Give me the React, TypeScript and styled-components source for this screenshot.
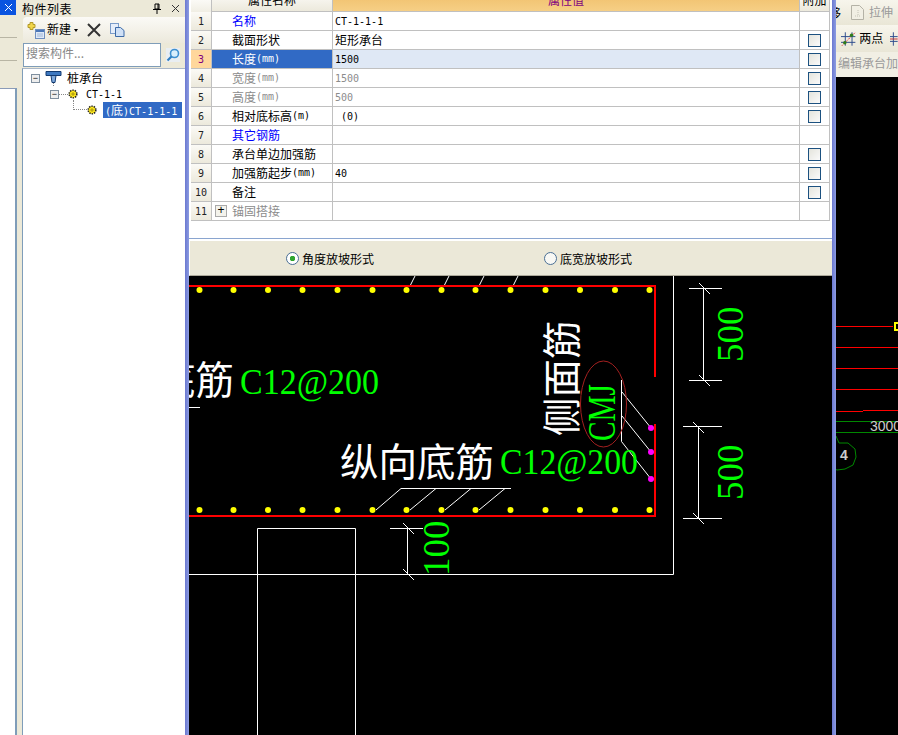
import styled, { createGlobalStyle } from "styled-components"

const GlobalStyle = createGlobalStyle`
    html, body {
        margin: 0;
        padding: 0;
        background: #fff;
    }
    * {
        box-sizing: border-box;
    }
`

const rows = [
    { no: 1, name: "名称", unit: "", value: "CT-1-1-1", tone: "blue", check: false },
    { no: 2, name: "截面形状", unit: "", value: "", cn: "矩形承台", tone: "", check: true },
    { no: 3, name: "长度", unit: "(mm)", value: "1500", tone: "active", check: true },
    { no: 4, name: "宽度", unit: "(mm)", value: "1500", tone: "grey", check: true },
    { no: 5, name: "高度", unit: "(mm)", value: "500", tone: "grey", check: true },
    { no: 6, name: "相对底标高", unit: "(m)", value: " (0)", tone: "", check: true },
    { no: 7, name: "其它钢筋", unit: "", value: "", tone: "blue", check: false },
    { no: 8, name: "承台单边加强筋", unit: "", value: "", tone: "", check: true },
    { no: 9, name: "加强筋起步", unit: "(mm)", value: "40", tone: "", check: true },
    { no: 10, name: "备注", unit: "", value: "", tone: "", check: true },
    { no: 11, name: "锚固搭接", unit: "", value: "", tone: "grey", check: false },
]

const rebarDots = [199.5, 233.5, 268, 302.5, 337.5, 372.5, 406.5, 441.5, 475.5, 510.5, 545.5, 580, 615, 649.5]

function GearIcon() {
    return (
        <svg width="10" height="10" viewBox="0 0 10 10">
            <circle cx="5" cy="5" r="3.8" fill="#ffe81a" stroke="#222" strokeWidth="1.6" strokeDasharray="1.4 1" />
            <path d="M3 5h4M5 3v4" stroke="#8a7a10" strokeWidth="0.7" />
        </svg>
    )
}

function CadDrawing() {
    return (
        <CadSvg viewBox="189 276 643 459" width="643" height="459">
            <g stroke="#fff" fill="none" strokeWidth="1">
                <path d="M189 574.5H673.5V276" />
                <path d="M257.5 735V528.5H355.5V735" />
                <path d="M189 407.5H200" />
                <path d="M410 286l5-10M444 286l5-10M479 286l5-10M513 286l5-10" />
                <path d="M376 510l25-21.5H511M410 510l26-21.5M445 510l26-21.5M479 510l26-21.5" />
                <path d="M621.5 380V441.5L651 479M622 392L651 428M622 416L651 452" />
                <path d="M689 288.5H722M703.5 288V380M689 380.5H722M699 283l11 11M699 375l11 11" />
                <path d="M683 426.5H722M698.5 426V518M683 518.5H722M693 422l11 11M693 513l11 11" />
                <path d="M390 528.5H423M407.5 528V575M403 523l11 11M403 569l11 11" />
            </g>
            <path d="M189 286H655V377M655 424V516H189" stroke="#f00" strokeWidth="2" fill="none" />
            <ellipse cx="603.5" cy="404" rx="23" ry="43" stroke="#a52020" fill="none" />
            {rebarDots.map(x => (
                <g key={x} fill="#ff0">
                    <circle cx={x} cy="290" r="3" />
                    <circle cx={x} cy="510" r="3" />
                </g>
            ))}
            <g fill="#f0f">
                <circle cx="651" cy="428" r="3" />
                <circle cx="651" cy="452" r="3" />
                <circle cx="651" cy="479" r="3" />
            </g>
            <CadLabel x="157" y="394" fontSize="38.5" fill="#fff">底筋</CadLabel>
            <CadLabel x="240" y="394" fontSize="36" textLength="139" lengthAdjust="spacingAndGlyphs" fill="#0f0">C12@200</CadLabel>
            <CadLabel x="340" y="476" fontSize="38.5" fill="#fff">纵向底筋</CadLabel>
            <CadLabel x="500" y="474" fontSize="36" textLength="138" lengthAdjust="spacingAndGlyphs" fill="#0f0">C12@200</CadLabel>
            <CadLabel transform="translate(576 436) rotate(-90)" fontSize="38.5" fill="#fff">侧面筋</CadLabel>
            <CadLabel transform="translate(615 441) rotate(-90)" fontSize="41" textLength="57" lengthAdjust="spacingAndGlyphs" fill="#0f0">CMJ</CadLabel>
            <CadLabel transform="translate(743 362) rotate(-90)" fontSize="37" fill="#0f0">500</CadLabel>
            <CadLabel transform="translate(743 500) rotate(-90)" fontSize="37" fill="#0f0">500</CadLabel>
            <CadLabel transform="translate(449 576) rotate(-90)" fontSize="37" fill="#0f0">100</CadLabel>
        </CadSvg>
    )
}

function SideDrawing() {
    return (
        <SideSvg viewBox="836 77 62 658" width="62" height="658">
            <path d="M836 326.5H893M836 347.5H898M836 368.5H898M836 389.5H898M836 411.5H863M863 410.5H898" stroke="#f00" fill="none" />
            <rect x="895" y="323" width="6" height="7" fill="none" stroke="#ff0" strokeWidth="2" />
            <path d="M836 421.5H898M836 432.5H898" stroke="#080" fill="none" />
            <path d="M836 436l3 7 9 0 7 6 1 8-3 8-8 4-8 1-4-2" stroke="#080" fill="none" />
            <SideLabel x="870" y="431" fontSize="14" fill="#ccc">3000</SideLabel>
            <SideLabel x="840" y="460" fontSize="14" fontWeight="700" fill="#ccc">4</SideLabel>
        </SideSvg>
    )
}

export default function App() {
    return (
        <Page>
            <GlobalStyle />
            <LeftStrip>
                <StripClose>
                    <svg width="9" height="9" viewBox="0 0 9 9"><path d="M1 1l7 7M8 1L1 8" stroke="#fff" fill="none" /></svg>
                </StripClose>
                <StripTab />
                <StripTab />
                <StripBody />
            </LeftStrip>
            <ListPanel>
                <TitleBar>
                    <TitleText>构件列表</TitleText>
                    <TitleIcons>
                        <svg width="10" height="11" viewBox="0 0 10 11"><path d="M3 1h4v5H3zM1 6.5h8M5 7v4M6 1v5" stroke="#000" fill="none" /></svg>
                        <svg width="9" height="9" viewBox="0 0 9 9"><path d="M1 1l7 7M8 1L1 8" stroke="#333" fill="none" /></svg>
                    </TitleIcons>
                </TitleBar>
                <ToolBar>
                    <svg width="18" height="17" viewBox="0 0 18 17">
                        <path d="M3 0.5h3v2h2v3H6v2H3v-2H1v-3h2z" fill="#f2d64a" stroke="#b39a2a" />
                        <rect x="8.5" y="7.5" width="9" height="9" fill="#dfe9f7" stroke="#6f8fc0" />
                        <path d="M9 8h8v2H9z" fill="#4a76b8" />
                        <path d="M10 12h6M10 14h6" stroke="#9fb6d8" />
                    </svg>
                    <NewLabel>新建</NewLabel>
                    <Caret />
                    <svg width="14" height="14" viewBox="0 0 14 14"><path d="M1 1l12 12M13 1L1 13" stroke="#333" strokeWidth="2" fill="none" /></svg>
                    <svg width="15" height="14" viewBox="0 0 15 14">
                        <rect x="0.5" y="0.5" width="8" height="10" fill="#e6eefa" stroke="#7b9cc9" />
                        <path d="M5.5 4.5h5l3.5 3v6h-8.5z" fill="#cfe0f6" stroke="#3c6aa8" />
                    </svg>
                </ToolBar>
                <SearchRow>
                    <SearchInput>搜索构件...</SearchInput>
                    <SearchButton>
                        <svg width="14" height="14" viewBox="0 0 14 14">
                            <circle cx="8.5" cy="5.5" r="4" fill="#d8eefc" stroke="#3d8fd0" strokeWidth="1.6" />
                            <path d="M5.5 8.5L1.5 12.5" stroke="#2f7fc4" strokeWidth="2.2" />
                        </svg>
                    </SearchButton>
                </SearchRow>
                <TreeBox>
                    <TreeRow $indent={8} $gap={5}>
                        <Toggle>−</Toggle>
                        <svg width="17" height="17" viewBox="0 0 17 17">
                            <path d="M1 1.5h15v4H1z" fill="#3d78c0" stroke="#123a70" />
                            <path d="M6 5.5h5l-1 7H7z" fill="#7fa9dc" stroke="#123a70" />
                            <path d="M8.5 13v3" stroke="#888" strokeDasharray="1 1" />
                        </svg>
                        <TreeText>桩承台</TreeText>
                    </TreeRow>
                    <TreeRow $indent={27} $gap={0}>
                        <Toggle>−</Toggle>
                        <TreeDash />
                        <GearIcon />
                        <TreeCode>CT-1-1</TreeCode>
                    </TreeRow>
                    <TreeRow $indent={50} $gap={0}>
                        <TreeElbow />
                        <GearIcon />
                        <Selected><Ascii>(</Ascii>底<Ascii>)CT-1-1-1</Ascii></Selected>
                    </TreeRow>
                </TreeBox>
            </ListPanel>
            <Splitter />
            <CenterColumn>
                <GridBox>
                    <HeaderRow>
                        <NoCell />
                        <HeadName>属性名称</HeadName>
                        <HeadValue>属性值</HeadValue>
                        <HeadAttach>附加</HeadAttach>
                    </HeaderRow>
                    {rows.map(r => (
                        <PropRow key={r.no}>
                            <NoCell $active={r.tone === "active"}>{r.no}</NoCell>
                            <NameCell $tone={r.tone}>
                                {r.no === 11 && <PlusBox>+</PlusBox>}
                                {r.name}
                                {r.unit && <Ascii>{r.unit}</Ascii>}
                            </NameCell>
                            <ValueCell $tone={r.tone}>
                                {r.cn ? <ValueCn>{r.cn}</ValueCn> : r.value}
                            </ValueCell>
                            <AttachCell>{r.check && <CheckBox />}</AttachCell>
                        </PropRow>
                    ))}
                </GridBox>
                <RadioBar>
                    <RadioItem><Radio $on />角度放坡形式</RadioItem>
                    <RadioItem><Radio />底宽放坡形式</RadioItem>
                </RadioBar>
                <CadDrawing />
            </CenterColumn>
            <BlueBar />
            <RightColumn>
                <RightTool>
                    <ClippedGlyph>移</ClippedGlyph>
                    <svg width="15" height="17" viewBox="0 0 15 17">
                        <path d="M1.5 1.5h8l4 4v10h-12z" fill="#f1efe4" stroke="#b4b2a6" />
                        <path d="M8 6v6M5 12h6" stroke="#c4c2b6" strokeDasharray="1 1" />
                    </svg>
                    <ToolText $grey>拉伸</ToolText>
                </RightTool>
                <RightTool $second>
                    <svg width="16" height="16" viewBox="0 0 16 16">
                        <path d="M4.5 1v14M11.5 1v14M0 5.5h15M0 11.5h15" stroke="#2c4a8c" fill="none" />
                        <path d="M1 15L15 1" stroke="#e02020" strokeDasharray="1.5 1" />
                        <circle cx="4" cy="12" r="1.8" fill="#2f7d1a" />
                        <circle cx="11" cy="4" r="1.8" fill="#2f7d1a" />
                    </svg>
                    <ToolText>两点</ToolText>
                    <svg width="8" height="16" viewBox="0 0 8 16">
                        <path d="M3.5 1v14M0 5.5h8M0 10.5h8" stroke="#2c4a8c" fill="none" />
                        <path d="M0 8h8" stroke="#c03030" />
                    </svg>
                </RightTool>
                <HintBar>编辑承台加</HintBar>
                <SideDrawing />
            </RightColumn>
        </Page>
    )
}

const uiFont = `"Noto Sans CJK SC", "Liberation Sans", sans-serif`
const asciiFont = `"DejaVu Sans Mono", "Liberation Mono", monospace`

const Page = styled.div`
    display: flex;
    width: 898px;
    height: 735px;
    overflow: hidden;
    background: #ece9d8;
    font-family: ${uiFont};
    font-size: 12px;
    color: #000;
`

const Ascii = styled.span`
    font-family: ${asciiFont};
    font-size: 10px;
`

const LeftStrip = styled.div`
    width: 17px;
    flex: none;
    display: flex;
    flex-direction: column;
    background: #ece9d8;
`

const StripClose = styled.div`
    width: 16px;
    height: 15px;
    display: flex;
    align-items: center;
    justify-content: flex-end;
    padding-right: 3px;
    background: #0a54e0;
`

const StripTab = styled.div`
    height: 23px;
    background: #ece9d8;
    border-bottom: 1px solid #b8b5a4;
`

const StripBody = styled.div`
    flex: 1;
    margin-top: 27px;
    background: #fff;
    border-top: 1px solid #8a9bb8;
    border-right: 2px solid #7f9db9;
`

const ListPanel = styled.div`
    width: 168px;
    flex: none;
    display: flex;
    flex-direction: column;
    padding-left: 5px;
    background: #ece9d8;
`

const TitleBar = styled.div`
    height: 17px;
    flex: none;
    display: flex;
    align-items: center;
    justify-content: space-between;
    padding-right: 5px;
`

const TitleText = styled.span`
    font-size: 12px;
    letter-spacing: 0.5px;
    line-height: 14px;
`

const TitleIcons = styled.div`
    display: flex;
    align-items: center;
    gap: 9px;
`

const ToolBar = styled.div`
    height: 26px;
    flex: none;
    margin-left: 1px;
    display: flex;
    align-items: center;
    padding-left: 4px;
    border-radius: 4px 0 0 4px;
    background: linear-gradient(#fbfaf6, #ece9dc);
    svg:nth-of-type(2) {
        margin-left: 9px;
    }
    svg:nth-of-type(3) {
        margin-left: 9px;
    }
`

const NewLabel = styled.span`
    font-size: 12px;
    margin: -3px 0 0 2px;
`

const Caret = styled.i`
    width: 0;
    height: 0;
    margin: 0 0 0 3px;
    border-left: 2.5px solid transparent;
    border-right: 2.5px solid transparent;
    border-top: 3px solid #000;
`

const SearchRow = styled.div`
    height: 24px;
    flex: none;
    margin-left: 1px;
    display: flex;
    align-items: center;
    gap: 5px;
`

const SearchInput = styled.div`
    width: 138px;
    height: 24px;
    padding-left: 2px;
    line-height: 17px;
    color: #888;
    background: #fff;
    border: 1px solid #7f9db9;
`

const SearchButton = styled.div`
    width: 14px;
    height: 14px;
    display: flex;
    align-items: center;
    justify-content: center;
    background: #e9eef2;
`

const TreeBox = styled.div`
    flex: 1;
    margin-top: 1px;
    padding-top: 1px;
    background: #fff;
    border-left: 1px solid #7f9db9;
    border-top: 1px solid #a9b7c9;
`

const TreeRow = styled.div<{ $indent: number; $gap: number }>`
    height: 16px;
    display: flex;
    align-items: center;
    gap: ${props => props.$gap}px;
    padding-left: ${props => props.$indent}px;
`

const Toggle = styled.span`
    width: 9px;
    height: 9px;
    flex: none;
    display: flex;
    align-items: center;
    justify-content: center;
    font-family: "Liberation Sans", sans-serif;
    font-size: 9px;
    line-height: 1;
    background: #eee;
    border: 1px solid #7f8f9f;
`

const TreeDash = styled.i`
    width: 9px;
    border-top: 1px dotted #888;
`

const TreeElbow = styled.i`
    width: 14px;
    height: 10px;
    flex: none;
    align-self: flex-start;
    margin-top: -2px;
    border-left: 1px dotted #888;
    border-bottom: 1px dotted #888;
`

const TreeText = styled.span`
    font-size: 12px;
    margin-top: -1px;
`

const TreeCode = styled.span`
    margin-left: 8px;
    font-family: ${asciiFont};
    font-size: 10px;
`

const Selected = styled.span`
    width: 79px;
    height: 16px;
    margin-left: 6px;
    padding-left: 2px;
    line-height: 15px;
    color: #fff;
    background: #316ac5;
    font-size: 12px;
    white-space: nowrap;
`

const Splitter = styled.div`
    width: 4px;
    flex: none;
    background: linear-gradient(90deg, #6b78d0, #8c9ce2);
`

const CenterColumn = styled.div`
    width: 643px;
    flex: none;
    display: flex;
    flex-direction: column;
`

const GridBox = styled.div`
    height: 239px;
    flex: none;
    background: #fff;
    border-bottom: 1px solid #8aa5cf;
    padding: 0 2px;
`

const PropRow = styled.div`
    display: grid;
    grid-template-columns: 21px 121px 466px 31px;
    grid-template-rows: 19px;
    height: 19px;
    line-height: 15px;
`

const HeaderRow = styled(PropRow)`
    grid-template-rows: 18px;
    height: 12px;
    overflow: hidden;
`

const NoCell = styled.div<{ $active?: boolean }>`
    display: flex;
    align-items: center;
    justify-content: center;
    font-family: ${asciiFont};
    font-size: 10px;
    color: ${props => (props.$active ? "#800080" : "#222")};
    background: ${props => (props.$active ? "#ffd79c" : "linear-gradient(#fbfaf6, #ece9dc)")};
    border-right: 1px solid #c0c0c0;
    border-bottom: 1px solid #c0c0c0;
`

const HeadName = styled.div`
    height: 18px;
    line-height: 1;
    margin-top: -6px;
    padding-left: 36px;
    font-size: 12px;
    background: linear-gradient(#fbfaf6, #ece9dc);
    border-right: 1px solid #c0c0c0;
    border-bottom: 1px solid #c0c0c0;
`

const HeadValue = styled.div`
    height: 18px;
    margin-top: -6px;
    text-align: center;
    color: #800080;
    line-height: 1;
    background: linear-gradient(#f0c06c, #f6cf85);
    border-bottom: 1px solid #c0c0c0;
`

const HeadAttach = styled.div`
    height: 18px;
    margin-top: -6px;
    text-align: center;
    line-height: 1;
    background: linear-gradient(#fbfaf6, #ece9dc);
    border-left: 1px solid #c0c0c0;
    border-right: 1px solid #c0c0c0;
    border-bottom: 1px solid #c0c0c0;
`

const toneColor = (tone: string) => {
    if (tone === "blue") return "#0000ff"
    if (tone === "grey") return "#8c8c8c"
    return "#000"
}

const NameCell = styled.div<{ $tone: string }>`
    display: flex;
    align-items: center;
    padding: 0 0 1px 20px;
    white-space: nowrap;
    font-size: 12px;
    position: relative;
    color: ${props => (props.$tone === "active" ? "#fff" : toneColor(props.$tone))};
    background: ${props => (props.$tone === "active" ? "#316ac5" : "#fff")};
    border-right: 1px solid #c0c0c0;
    border-bottom: 1px solid #c0c0c0;
`

const PlusBox = styled.span`
    position: absolute;
    left: 3px;
    top: 3px;
    width: 12px;
    height: 12px;
    line-height: 9px;
    text-align: center;
    font-family: "Liberation Sans", sans-serif;
    color: #000;
    background: #f4f3ec;
    border: 1px solid #aaa;
`

const ValueCell = styled.div<{ $tone: string }>`
    display: flex;
    align-items: center;
    padding-left: 2px;
    white-space: pre;
    font-size: 10px;
    font-family: ${asciiFont};
    color: ${props => (props.$tone === "grey" ? "#8c8c8c" : "#000")};
    background: ${props => (props.$tone === "active" ? "#dfe8f5" : "#fff")};
    border-bottom: 1px solid #c0c0c0;
`

const ValueCn = styled.span`
    font-family: ${uiFont};
    font-size: 12px;
    margin-top: -1px;
`

const AttachCell = styled.div`
    display: flex;
    align-items: center;
    justify-content: center;
    border-left: 1px solid #c0c0c0;
    border-right: 1px solid #c0c0c0;
    border-bottom: 1px solid #c0c0c0;
`

const CheckBox = styled.i`
    width: 13px;
    height: 13px;
    background: linear-gradient(135deg, #e4e4dc, #fafafa);
    border: 1px solid #1c5180;
`

const RadioBar = styled.div`
    height: 37px;
    flex: none;
    display: flex;
    align-items: center;
    padding-left: 96px;
    gap: 170px;
    background: #ebe8d8;
    border-top: 2px solid #fff;
    border-left: 1px solid #fff;
    border-bottom: 1px solid #aca899;
    font-size: 12px;
`

const RadioItem = styled.label`
    display: flex;
    align-items: center;
    gap: 3px;
    line-height: 15px;
`

const Radio = styled.i<{ $on?: boolean }>`
    width: 13px;
    height: 13px;
    border-radius: 50%;
    border: 1px solid #4a6f95;
    background: ${props => (props.$on ? "radial-gradient(circle, #2fa52f 0 2.5px, #fff 3px)" : "#f8f8f4")};
`

const CadSvg = styled.svg`
    display: block;
    flex: none;
    background: #000;
`

const CadLabel = styled.text`
    font-family: "Liberation Serif", "Noto Sans CJK SC", serif;
`

const BlueBar = styled.div`
    width: 4px;
    flex: none;
    background: linear-gradient(90deg, #6b78d0, #8c9ce2);
`

const RightColumn = styled.div`
    flex: 1;
    min-width: 0;
    display: flex;
    flex-direction: column;
    overflow: hidden;
    background: #f1efe4;
`

const RightTool = styled.div<{ $second?: boolean }>`
    height: ${props => (props.$second ? 27 : 25)}px;
    flex: none;
    display: flex;
    align-items: center;
    gap: ${props => (props.$second ? 3 : 4)}px;
    padding-left: ${props => (props.$second ? 5 : 0)}px;
    background: linear-gradient(#f7f5ec, #e9e6d6);
    svg:last-child {
        margin-left: ${props => (props.$second ? 4 : 0)}px;
    }
`

const ClippedGlyph = styled.span`
    width: 11px;
    margin-left: -6px;
    margin-right: 5px;
    overflow: hidden;
    direction: rtl;
    font-size: 12px;
`

const ToolText = styled.span<{ $grey?: boolean }>`
    font-size: 12px;
    white-space: nowrap;
    margin-top: -2px;
    color: ${props => (props.$grey ? "#9a9a9a" : "#000")};
`

const HintBar = styled.div`
    height: 25px;
    flex: none;
    line-height: 22px;
    padding-left: 2px;
    white-space: nowrap;
    color: #9a9a9a;
    font-size: 12px;
`

const SideSvg = styled.svg`
    display: block;
    flex: none;
    background: #000;
`

const SideLabel = styled.text`
    font-family: "Liberation Sans", sans-serif;
`
